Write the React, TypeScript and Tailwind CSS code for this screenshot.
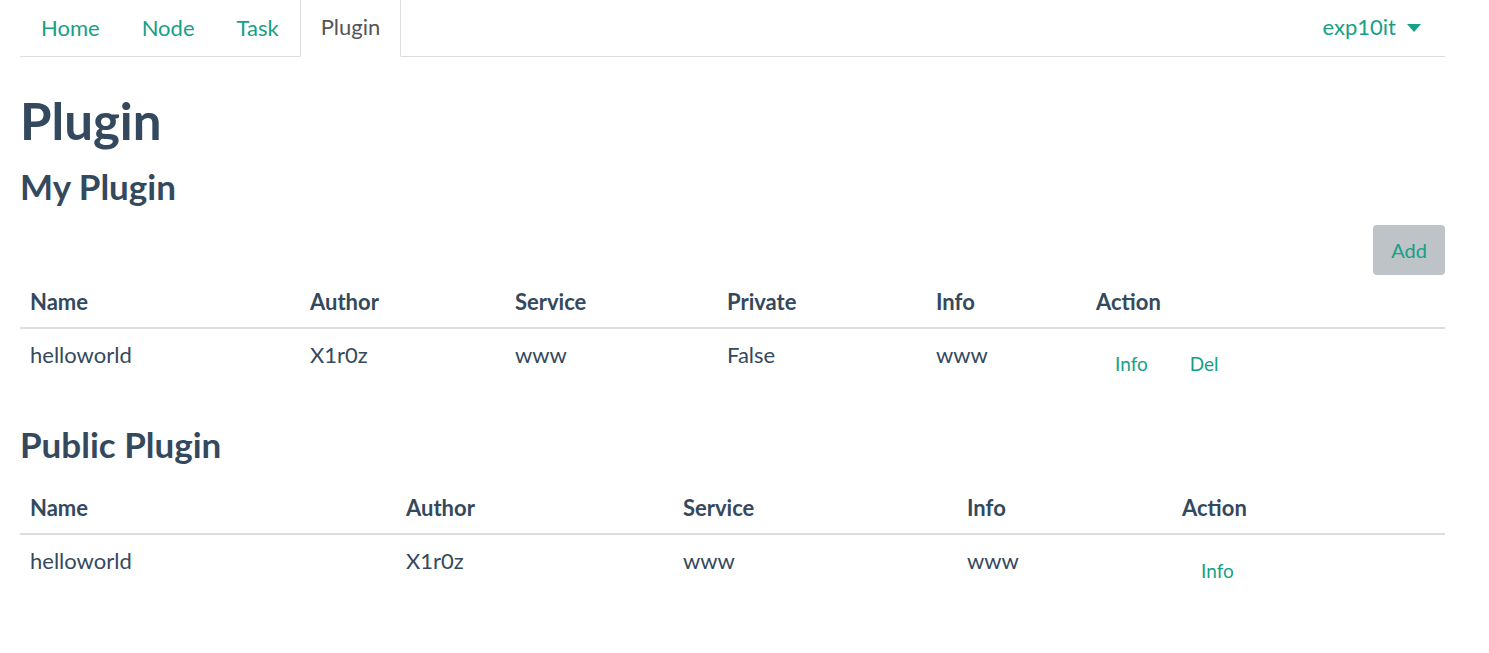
import React from "react";

const myPlugins = [
  { name: "helloworld", author: "X1r0z", service: "www", priv: "False", info: "www" },
];

const publicPlugins = [
  { name: "helloworld", author: "X1r0z", service: "www", info: "www" },
];

const tabs = ["Home", "Node", "Task", "Plugin"];

function ActionLink({ children }: { children: React.ReactNode }) {
  return (
    <a href="#" className="text-[19px] leading-[27px] text-[#16a085] no-underline">
      {children}
    </a>
  );
}

export default function App() {
  return (
    <div className="min-h-[653px] bg-white font-['Lato','Liberation_Sans',sans-serif] text-[#34495e]">
      <div className="ml-[20px] w-[1425px]">
        {/* Tabs */}
        <ul className="flex h-[57px] border-b border-[#dddddd]">
          {tabs.map((t) => {
            const active = t === "Plugin";
            return (
              <li key={t} className="-mb-px">
                <a
                  href="#"
                  className={
                    active
                      ? "flex h-[57px] items-center border-x border-[#dddddd] border-b border-b-white bg-white px-5 pb-[3px] text-[22px] text-[#555555]"
                      : "flex h-[57px] items-center border-x border-transparent px-5 pb-[3px] text-[22px] text-[#16a085]"
                  }
                >
                  {t}
                </a>
              </li>
            );
          })}
          <li className="ml-auto">
            <a
              href="#"
              className="flex h-[56px] items-center gap-[11px] pr-[24px] pb-[3px] text-[22px] text-[#16a085]"
            >
              exp10it
              <span className="mt-[3px] h-0 w-0 border-x-[7px] border-t-[8px] border-x-transparent border-t-[#16a085]" />
            </a>
          </li>
        </ul>

        <h1 className="mt-[36px] text-[51px] font-bold leading-[1.1]">Plugin</h1>
        <h3 className="mt-[18px] text-[35px] font-bold leading-[1.1]">My Plugin</h3>

        <div className="mt-[19px] flex justify-end">
          <button className="flex h-[50px] w-[72px] items-center justify-center rounded-[4px] bg-[#bdc3c7] text-[20px] text-[#16a085]">
            Add
          </button>
        </div>

        <table className="mt-[1px] w-full table-fixed border-collapse text-[22px] leading-[31px]">
          <thead>
            <tr className="border-b-2 border-[#dddddd] text-left">
              <th className="w-[280px] p-[10px] font-bold">Name</th>
              <th className="w-[205px] p-[10px] font-bold">Author</th>
              <th className="w-[212px] p-[10px] font-bold">Service</th>
              <th className="w-[209px] p-[10px] font-bold">Private</th>
              <th className="w-[160px] p-[10px] font-bold">Info</th>
              <th className="p-[10px] font-bold">Action</th>
            </tr>
          </thead>
          <tbody>
            {myPlugins.map((p) => (
              <tr key={p.name} className="align-top">
                <td className="p-[10px]">{p.name}</td>
                <td className="p-[10px]">{p.author}</td>
                <td className="p-[10px]">{p.service}</td>
                <td className="p-[10px]">{p.priv}</td>
                <td className="p-[10px]">{p.info}</td>
                <td className="p-[10px]">
                  <div className="flex gap-[42px] pt-[11px] pb-[8px] pl-[19px]">
                    <ActionLink>Info</ActionLink>
                    <ActionLink>Del</ActionLink>
                  </div>
                </td>
              </tr>
            ))}
          </tbody>
        </table>

        <h3 className="mt-[30px] text-[35px] font-bold leading-[1.1]">Public Plugin</h3>

        <table className="mt-[19px] w-full table-fixed border-collapse text-[22px] leading-[31px]">
          <thead>
            <tr className="border-b-2 border-[#dddddd] text-left">
              <th className="w-[376px] p-[10px] font-bold">Name</th>
              <th className="w-[277px] p-[10px] font-bold">Author</th>
              <th className="w-[284px] p-[10px] font-bold">Service</th>
              <th className="w-[215px] p-[10px] font-bold">Info</th>
              <th className="p-[10px] font-bold">Action</th>
            </tr>
          </thead>
          <tbody>
            {publicPlugins.map((p) => (
              <tr key={p.name} className="align-top">
                <td className="p-[10px]">{p.name}</td>
                <td className="p-[10px]">{p.author}</td>
                <td className="p-[10px]">{p.service}</td>
                <td className="p-[10px]">{p.info}</td>
                <td className="p-[10px]">
                  <div className="flex pt-[12px] pb-[7px] pl-[19px]">
                    <ActionLink>Info</ActionLink>
                  </div>
                </td>
              </tr>
            ))}
          </tbody>
        </table>
      </div>
    </div>
  );
}
